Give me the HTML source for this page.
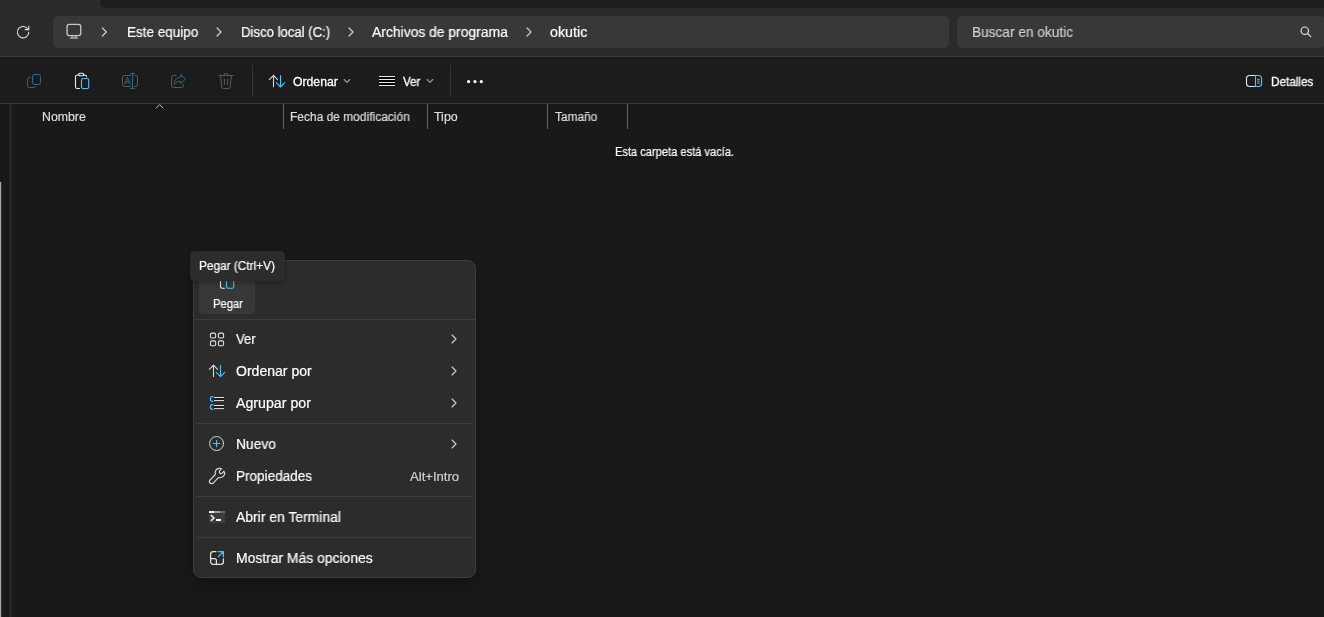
<!DOCTYPE html>
<html>
<head>
<meta charset="utf-8">
<title>okutic</title>
<style>
*{box-sizing:border-box;margin:0;padding:0}
html,body{width:1324px;height:617px;overflow:hidden;background:#191919}
body{font-family:"Liberation Sans",sans-serif;color:#fff;position:relative}
.abs{position:absolute}
.t{position:absolute;white-space:nowrap;line-height:1;transform-origin:0 50%;will-change:transform}
.t{-webkit-text-stroke:0.2px currentColor}
.sb{-webkit-text-stroke:0.28px #fff}
svg{position:absolute;overflow:visible}
/* top strip */
#strip{left:0;top:0;width:1324px;height:8px;background:#2b2b2b}
#tabdark{left:100px;top:0;width:1224px;height:8px;background:#1f1f1f;border-bottom-left-radius:5px}
#nav{left:0;top:8px;width:1324px;height:48px;background:#2b2b2b}
#navline{left:0;top:56px;width:1324px;height:1px;background:#3a3a3a}
#addr{left:53px;top:16px;width:896px;height:32px;background:#383838;border-radius:5px}
#search{left:957px;top:16px;width:368px;height:32px;background:#383838;border-radius:5px}
#tool{left:0;top:57px;width:1324px;height:46px;background:#1c1c1c}
#toolline{left:0;top:103px;width:1324px;height:1px;background:#383838}
#content{left:0;top:104px;width:1324px;height:513px;background:#191919}
#thumb{left:0;top:182px;width:2px;height:435px;background:linear-gradient(90deg,#a6a6a6 0,#a6a6a6 1px,#3a3a3a 1px,#3a3a3a 1.4px,#191919 2px)}
#vdiv{left:8px;top:104px;width:4px;height:513px;background:linear-gradient(90deg,#161616 0,#161616 1px,#1e1e1e 1px,#1e1e1e 2px,#2b2b2b 2px,#2b2b2b 3px,#212121 3px,#212121 4px)}
.sep{position:absolute;width:1px;background:#333}
.csep{position:absolute;width:1px;top:104px;height:25px;background:#636363}
/* menu */
#menu{left:193px;top:260px;width:283px;height:318px;background:#2c2c2c;border:1px solid #3c3c3c;border-radius:8px;box-shadow:0 8px 16px rgba(0,0,0,.25)}
.msep{position:absolute;left:197px;width:275px;height:1px;background:#3d3d3d}
#pegbtn{left:199px;top:268px;width:56px;height:46px;background:#383838;border-radius:4px}
#tip{left:190px;top:251px;width:95px;height:30px;background:#2c2c2c;border:1px solid #2a2a2a;border-radius:4px;box-shadow:0 2px 5px rgba(0,0,0,.28)}
</style>
</head>
<body>
<div class="abs" id="strip"></div>
<div class="abs" id="tabdark"></div>
<div class="abs" id="nav"></div>
<div class="abs" id="navline"></div>
<div class="abs" id="addr"></div>
<div class="abs" id="search"></div>
<div class="abs" id="tool"></div>
<div class="abs" id="toolline"></div>
<div class="abs" id="content"></div>
<div class="abs" id="thumb"></div>
<div class="abs" id="vdiv"></div>
<div class="sep" style="left:252px;top:65px;height:32px"></div>
<div class="sep" style="left:450px;top:65px;height:32px"></div>
<div class="csep" style="left:283px"></div>
<div class="csep" style="left:427px"></div>
<div class="csep" style="left:547px"></div>
<div class="csep" style="left:627px"></div>
<svg id="icons" width="1324" height="617" viewBox="0 0 1324 617" style="left:0;top:0" fill="none" stroke-linecap="round" stroke-linejoin="round">
<!-- refresh -->
<g stroke="#dedede" stroke-width="1.1">
<path d="M28.2 29.7 A5.7 5.7 0 1 0 28.75 32.3"/>
<path d="M28.8 26.2 V29.6 H25.2"/>
</g>
<!-- monitor -->
<g stroke="#c8c8c8" stroke-width="1.3">
<rect x="67.05" y="24.35" width="13.7" height="11.2" rx="2.2"/>
<path d="M71.6 36.2 H76.4 L78.6 38.7 H69.4 Z" fill="#a9a9a9" stroke="none"/><rect x="73.2" y="36.4" width="1.6" height="1.1" fill="#4a4a4a" stroke="none"/>
</g>
<!-- breadcrumb chevrons -->
<g stroke="#cfcfcf" stroke-width="1.2">
<path d="M102.4 28 L106.4 32 L102.4 36"/>
<path d="M217 28 L221 32 L217 36"/>
<path d="M349 28 L353 32 L349 36"/>
<path d="M527 28 L531 32 L527 36"/>
</g>
<!-- search -->
<g stroke="#e0e0e0" stroke-width="1.2">
<circle cx="1304.8" cy="30.7" r="3.7"/>
<path d="M1307.6 33.5 L1310.8 36.7"/>
</g>
<!-- toolbar: copy (disabled) -->
<g stroke-width="1">
<path d="M30.5 77.5 H29.5 A2 2 0 0 0 27.5 79.5 V85.5 A2 2 0 0 0 29.5 87.5 H33.5 A2 2 0 0 0 35.5 86.3" stroke="#5a5a5a"/>
<rect x="32.5" y="74.5" width="8" height="10" rx="2" stroke="#2c6b8c"/>
</g>
<!-- paste (active) -->
<g stroke-width="1.1">
<path d="M79 75 H77.3 A1.8 1.8 0 0 0 75.5 76.8 V86.7 A1.8 1.8 0 0 0 77.3 88.5 H79.5 M83.5 75 H85 A1.8 1.8 0 0 1 86.6 76.8" stroke="#ececec"/>
<rect x="78.6" y="73.2" width="5.2" height="2.6" rx="1.3" stroke="#ececec"/>
<rect x="81.5" y="78.5" width="7.2" height="10" rx="1.6" stroke="#4cc2ff"/>
</g>
<!-- rename (disabled) -->
<g stroke-width="1">
<path d="M130.5 75.5 H124.5 A2 2 0 0 0 122.5 77.5 V84.5 A2 2 0 0 0 124.5 86.5 H130.5 M134.5 75.5 H135.5 A2 2 0 0 1 137.5 77.5 V84.5 A2 2 0 0 1 135.5 86.5 H134.5" stroke="#5a5a5a"/>
<path d="M132.5 73.5 V88.5 M130.5 73.5 H134.5 M130.5 88.5 H134.5" stroke="#2c6b8c"/>
<path d="M124.8 84 L127.5 77.5 L130.2 84 M125.8 82 H129.2" stroke="#2c6b8c"/>
</g>
<!-- share (disabled) -->
<g stroke-width="1">
<path d="M176 75.5 H173.5 A2 2 0 0 0 171.5 77.5 V85.5 A2 2 0 0 0 173.5 87.5 H181.5 A2 2 0 0 0 183.5 85.5 V84.5" stroke="#5a5a5a"/>
<path d="M180.9 74.6 L185.3 79.1 L180.9 83.7 V81.5 C178 81.3 175.8 82.3 174 84.4 C174.2 80 176.5 77.2 180.9 76.9 Z" stroke="#2c6b8c"/>
</g>
<!-- trash (disabled) -->
<g stroke-width="1" stroke="#5a5a5a">
<path d="M219 75.5 H233 M224 75.3 A2 2 0 0 1 228 75.3 M220.6 75.8 L221.8 87 A1.6 1.6 0 0 0 223.4 88.5 H228.6 A1.6 1.6 0 0 0 230.2 87 L231.4 75.8 M224.4 79 V84.6 M227.7 79 V84.6"/>
</g>
<!-- sort toolbar -->
<g stroke-width="1.1">
<path d="M273.5 86.7 V75.3 M269.3 79.6 L273.5 75.3 L277.6 79.6" stroke="#d8d8d8"/>
<path d="M280.5 75.6 V87 M276.3 82.7 L280.5 87 L284.7 82.7" stroke="#4cc2ff"/>
</g>
<!-- chevrons down -->
<g stroke="#9d9d9d" stroke-width="1.1">
<path d="M344.2 79.5 L347 82.4 L349.8 79.5"/>
<path d="M427.2 79.5 L430 82.4 L432.8 79.5"/>
</g>
<!-- view icon -->
<rect x="379" y="77" width="16" height="8.5" fill="#050505" stroke="none"/>
<g stroke="#e6e6e6" stroke-width="1" stroke-linecap="butt">
<path d="M379 76.5 H395 M379 79.5 H395 M379 82.5 H395 M379 85.5 H395"/>
</g>
<!-- dots -->
<g fill="#ffffff" stroke="none">
<circle cx="468.6" cy="81.6" r="1.6"/><circle cx="475" cy="81.6" r="1.6"/><circle cx="481.3" cy="81.6" r="1.6"/>
</g>
<!-- details -->
<g stroke-width="1.1">
<path d="M1255.3 75.5 H1249.5 A3 3 0 0 0 1246.5 78.5 V83.5 A3 3 0 0 0 1249.5 86.5 H1255.3" stroke="#e6e6e6"/>
<path d="M1255.5 75.5 H1258.6 A3 3 0 0 1 1261.6 78.5 V83.5 A3 3 0 0 1 1258.6 86.5 H1255.5 Z" stroke="#4cc2ff"/>
<path d="M1257.6 79.3 H1259.4 M1257.6 81.2 H1259.4 M1257.6 83.1 H1259.4" stroke="#4cc2ff" stroke-width="1"/>
</g>
<!-- column sort chevron -->
<path d="M156.3 108 L159.6 104.5 L163 108" stroke="#bdbdbd" stroke-width="1"/>
</svg>
<span class="t" style="left:126.7px;top:25px;font-size:14px;color:#ffffff;transform:scaleX(0.9628)">Este equipo</span>
<span class="t" style="left:240.7px;top:25px;font-size:14px;color:#ffffff;transform:scaleX(0.9399)">Disco local (C:)</span>
<span class="t" style="left:372.2px;top:25px;font-size:14px;color:#ffffff;transform:scaleX(0.9916)">Archivos de programa</span>
<span class="t" style="left:550.2px;top:25px;font-size:14px;color:#ffffff;transform:scaleX(1.0197)">okutic</span>
<span class="t" style="left:972.0px;top:25px;font-size:14px;color:#cccccc;transform:scaleX(0.9758)">Buscar en okutic</span>
<span class="t sb" style="left:293.0px;top:76px;font-size:12px;color:#ffffff;transform:scaleX(1.0175)">Ordenar</span>
<span class="t sb" style="left:403.0px;top:76px;font-size:12px;color:#ffffff;transform:scaleX(0.9658)">Ver</span>
<span class="t sb" style="left:1270.6px;top:76px;font-size:12px;color:#ffffff;transform:scaleX(0.9779)">Detalles</span>
<span class="t" style="left:42.4px;top:111px;font-size:12px;color:#dedede;transform:scaleX(1.0261)">Nombre</span>
<span class="t" style="left:290.3px;top:111px;font-size:12px;color:#dedede;transform:scaleX(0.9969)">Fecha de modificación</span>
<span class="t" style="left:434.4px;top:111px;font-size:12px;color:#dedede;transform:scaleX(1.0347)">Tipo</span>
<span class="t" style="left:554.6px;top:111px;font-size:12px;color:#dedede;transform:scaleX(0.9882)">Tamaño</span>
<span class="t" style="left:614.5px;top:146px;font-size:12px;color:#ffffff;transform:scaleX(0.9243)">Esta carpeta está vacía.</span>
<!-- context menu -->
<div class="abs" id="menu"></div>
<div class="abs" id="pegbtn"></div>
<div class="msep" style="top:319px;left:194px;width:281px"></div>
<div class="msep" style="top:423px"></div>
<div class="msep" style="top:496px"></div>
<div class="msep" style="top:537px"></div>
<svg id="micons" width="1324" height="617" viewBox="0 0 1324 617" style="left:0;top:0" fill="none" stroke-linecap="round" stroke-linejoin="round">
<!-- paste (partially hidden by tooltip) -->
<g stroke-width="1.1">
<path d="M224 274.5 H222.3 A1.8 1.8 0 0 0 220.5 276.3 V286.5 A1.8 1.8 0 0 0 222.3 288.3 H224.4 M228.5 274.5 H230 A1.8 1.8 0 0 1 231.6 276.3" stroke="#ececec"/>
<rect x="223.6" y="272.7" width="5.2" height="2.6" rx="1.3" stroke="#ececec"/>
<rect x="226.5" y="278.3" width="7.2" height="10" rx="1.6" stroke="#4cc2ff"/>
</g>
<!-- Ver grid -->
<g stroke="#e2e2e2" stroke-width="1.05">
<rect x="210.45" y="333.1" width="5.2" height="4.9" rx="1.3"/>
<rect x="218.4" y="333.1" width="5.2" height="4.9" rx="1.3"/>
<rect x="210.45" y="340.85" width="5.2" height="4.9" rx="1.3"/>
<rect x="218.4" y="340.85" width="5.2" height="4.9" rx="1.3"/>
</g>
<!-- Ordenar por -->
<g stroke-width="1.1">
<path d="M213.5 376.4 V365.2 M209.3 369.4 L213.5 365.2 L217.6 369.4" stroke="#d8d8d8"/>
<path d="M220.5 365.4 V376.6 M216.3 372.4 L220.5 376.6 L224.7 372.4" stroke="#4cc2ff"/>
</g>
<!-- Agrupar por -->
<rect x="214" y="398" width="10" height="2.4" fill="#1b1b1b" stroke="none"/>
<rect x="214" y="406" width="10" height="2.4" fill="#1b1b1b" stroke="none"/>
<g stroke-width="1.1">
<path d="M212.8 396.7 H212.1 A1.6 1.6 0 0 0 210.5 398.3 V399.7 A1.6 1.6 0 0 0 212.1 401.3 H212.8 M212.8 404.7 H212.1 A1.6 1.6 0 0 0 210.5 406.3 V407.7 A1.6 1.6 0 0 0 212.1 409.3 H212.8" stroke="#4cc2ff" stroke-width="1.3"/>
<path d="M214.4 397.5 H223.6 M214.4 400.6 H223.6 M214.4 405.5 H223.6 M214.4 408.6 H223.6" stroke="#e4e4e4" stroke-width="1"/>
</g>
<!-- Nuevo -->
<circle cx="216.6" cy="443.5" r="7" stroke="#d6d6d6" stroke-width="1"/>
<path d="M213.3 443.5 H219.9 M216.6 440.2 V446.8" stroke="#4cc2ff" stroke-width="1.1"/>
<!-- Propiedades wrench -->
<path d="M215.3 474.5 C214.8 471.5 216 469 218.8 468.4 C219.8 468.2 220.8 468.3 221.6 468.7 L219.6 470.8 C219.1 471.6 219.3 472.6 220 473.2 C220.7 473.8 221.6 473.7 222.2 473.1 L224 471.2 C224.9 472.6 224.9 474.6 223.4 476.2 C222 477.6 220.2 477.9 218.4 477.6 L213.4 482.8 C212.5 483.8 211 483.9 210.1 483 C209.2 482.1 209.3 480.7 210.2 479.8 Z" stroke="#dcdcdc" stroke-width="1.15"/>
<!-- Terminal -->
<g stroke="none">
<rect x="209" y="511" width="16" height="12" fill="#3d3d3d"/>
<rect x="209" y="511" width="5" height="2" fill="#f0f0f0"/>
<rect x="214" y="511" width="6" height="2" fill="#a0a0a0"/>
<rect x="220" y="511" width="5" height="2" fill="#6a6a6a"/>
<rect x="216" y="519" width="5" height="2" fill="#ffffff"/>
</g>
<path d="M211.4 515.6 L214 518 L211.4 520.4" stroke="#f4f4f4" stroke-width="1.4" stroke-linecap="square" stroke-linejoin="miter"/>
<!-- Mostrar mas opciones -->
<g stroke-width="1.25">
<path d="M216 551.7 H213.2 A2.6 2.6 0 0 0 210.6 554.3 V561.7 A2.6 2.6 0 0 0 213.2 564.3 H220.8 A2.6 2.6 0 0 0 223.4 561.7 V558.8" stroke="#e2e2e2"/>
<path d="M210.6 558.6 H214.4 A2 2 0 0 1 216.4 560.6 V564.2" stroke="#e2e2e2"/>
<path d="M218.3 556.6 L223.3 551.8 M218.4 551.7 H223.4 V556.7" stroke="#4cc2ff" stroke-width="1.25"/>
</g>
<!-- submenu chevrons -->
<g stroke="#cfcfcf" stroke-width="1.1">
<path d="M452 335 L456 339 L452 343"/>
<path d="M452 367 L456 371 L452 375"/>
<path d="M452 399 L456 403 L452 407"/>
<path d="M452 440 L456 444 L452 448"/>
</g>
</svg>
<span class="t" style="left:212.6px;top:298px;font-size:12px;color:#ffffff;transform:scaleX(0.9366)">Pegar</span>
<span class="t" style="left:236.1px;top:332px;font-size:14px;color:#ffffff;transform:scaleX(0.9374)">Ver</span>
<span class="t" style="left:236.1px;top:364px;font-size:14px;color:#ffffff;transform:scaleX(1.0029)">Ordenar por</span>
<span class="t" style="left:236.1px;top:396px;font-size:14px;color:#ffffff;transform:scaleX(1.0130)">Agrupar por</span>
<span class="t" style="left:236.1px;top:437px;font-size:14px;color:#ffffff;transform:scaleX(0.9859)">Nuevo</span>
<span class="t" style="left:236.1px;top:469px;font-size:14px;color:#ffffff;transform:scaleX(0.9679)">Propiedades</span>
<span class="t" style="left:409.9px;top:471px;font-size:12px;color:#cfcfcf;transform:scaleX(1.0904)">Alt+Intro</span>
<span class="t" style="left:236.1px;top:510px;font-size:14px;color:#ffffff;transform:scaleX(0.9937)">Abrir en Terminal</span>
<span class="t" style="left:236.1px;top:551px;font-size:14px;color:#ffffff;transform:scaleX(0.9926)">Mostrar Más opciones</span>
<!-- tooltip -->
<div class="abs" id="tip"></div>
<span class="t" style="left:199.4px;top:260px;font-size:12px;color:#ffffff;transform:scaleX(0.9866)">Pegar (Ctrl+V)</span>
</body>
</html>
